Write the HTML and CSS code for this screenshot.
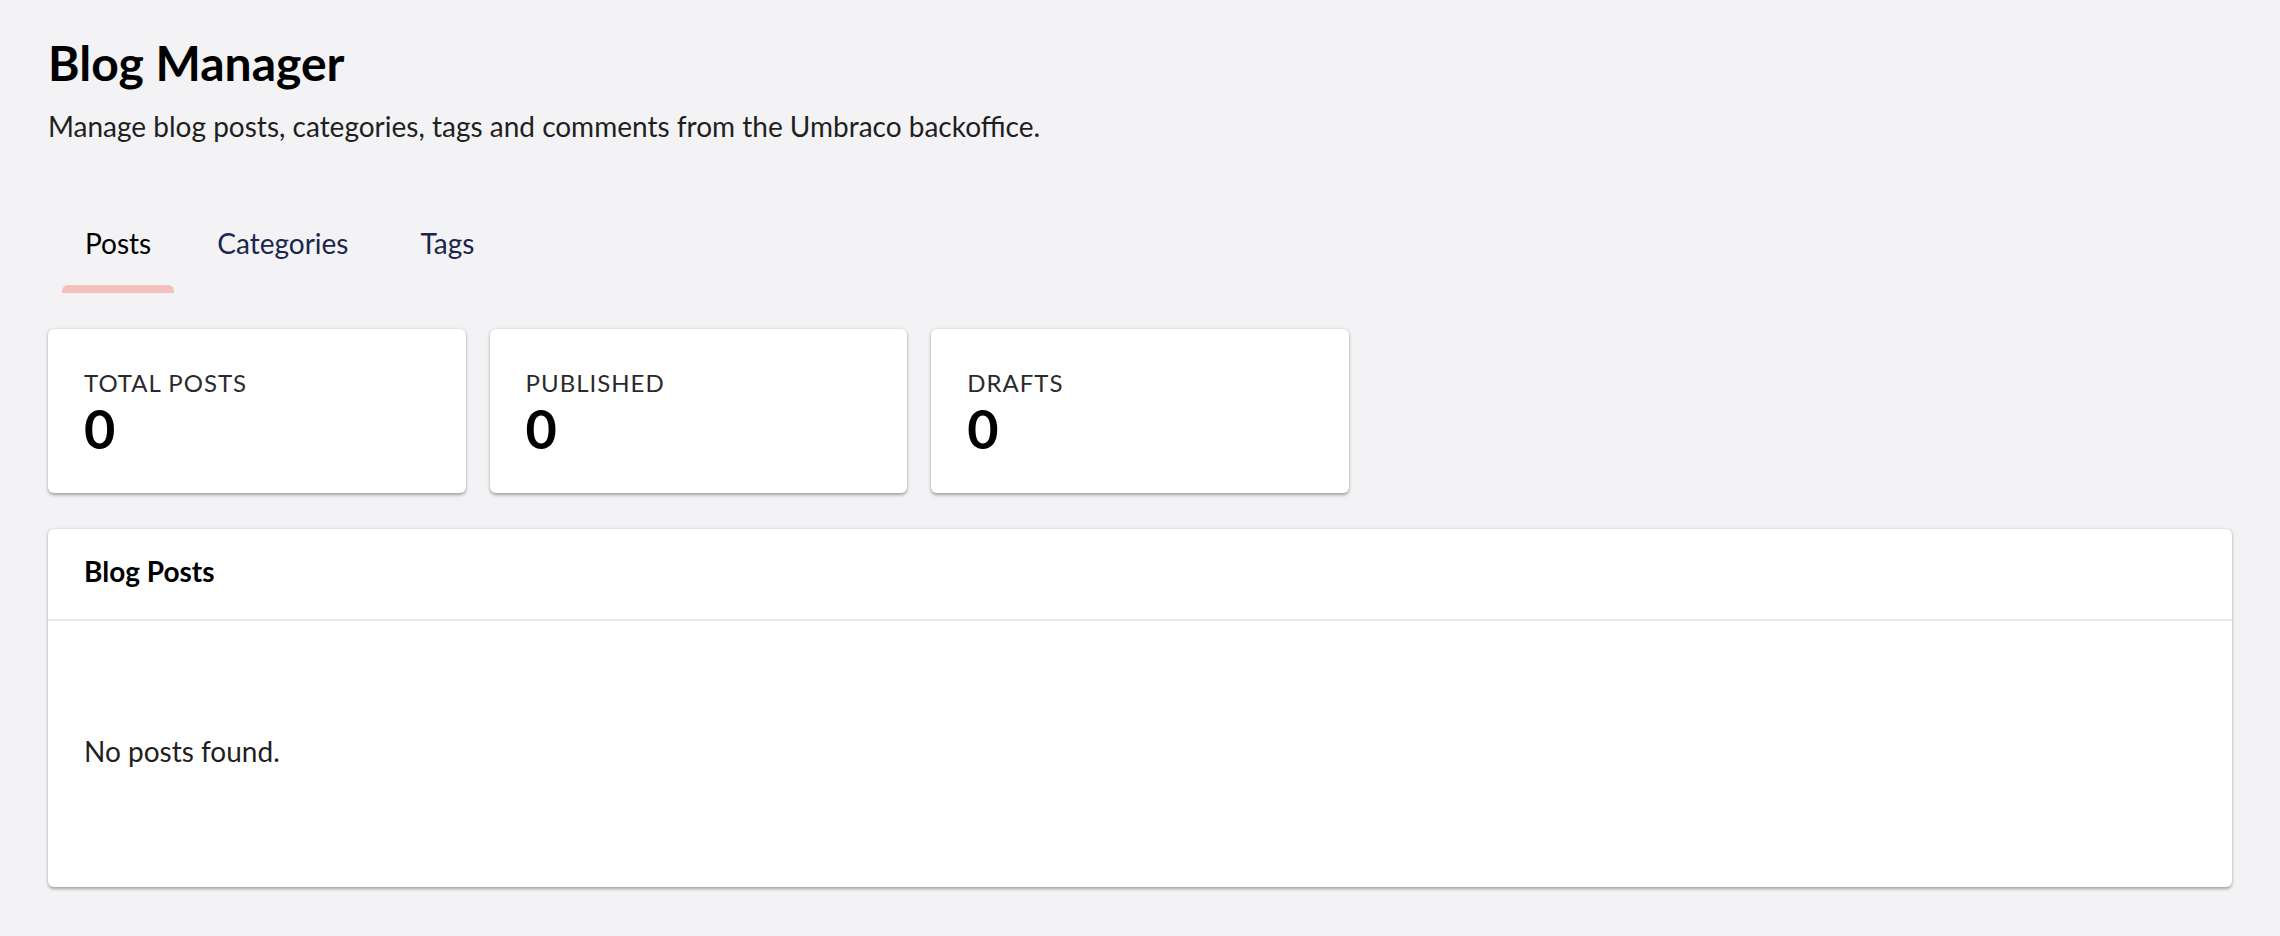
FILE: index.html
```html
<!DOCTYPE html>
<html lang="en">
<head>
<meta charset="utf-8">
<title>Blog Manager</title>
<link rel="stylesheet" href="styles.css">
</head>
<body>
<main class="page">
  <header class="page-header">
    <h1 class="page-title">Blog Manager</h1>
    <p class="page-subtitle">Manage blog posts, categories, tags and comments from the Umbraco backoffice.</p>
  </header>

  <nav class="tabs">
    <div class="tab tab-active"><span class="tab-label">Posts</span><span class="tab-bar"></span></div>
    <div class="tab"><span class="tab-label">Categories</span><span class="tab-bar"></span></div>
    <div class="tab"><span class="tab-label">Tags</span><span class="tab-bar"></span></div>
  </nav>

  <section class="stats">
    <div class="stat-card">
      <div class="stat-label">TOTAL POSTS</div>
      <div class="stat-value">0</div>
    </div>
    <div class="stat-card">
      <div class="stat-label">PUBLISHED</div>
      <div class="stat-value">0</div>
    </div>
    <div class="stat-card">
      <div class="stat-label">DRAFTS</div>
      <div class="stat-value">0</div>
    </div>
  </section>

  <section class="box">
    <div class="box-header">Blog Posts</div>
    <div class="box-body">
      <p class="empty">No posts found.</p>
    </div>
  </section>
</main>
</body>
</html>
```

FILE: styles.css
```css
* {
  box-sizing: border-box;
}

html, body {
  margin: 0;
  padding: 0;
  background: #f3f3f5;
}

body {
  font-family: Lato, "Noto Sans", "Liberation Sans", sans-serif;
  color: #1b1b1b;
  width: 2280px;
  min-height: 936px;
}

.page {
  padding: 34px 48px 48px;
}

.page-title {
  margin: 0;
  font-size: 48px;
  line-height: 57.6px;
  font-weight: 700;
  color: #000;
}

.page-subtitle {
  margin: 13px 0 0;
  font-size: 28px;
  line-height: 42px;
  color: #1f1f1f;
}

.tabs {
  display: flex;
  gap: 20px;
  margin: 75.5px 0 0 14px;
}

.tab {
  display: flex;
  flex-direction: column;
  align-items: stretch;
  min-width: 112px;
  padding: 0;
  color: #1b264f;
  font-size: 28px;
  line-height: 42px;
}

.tab-label {
  padding: 0 23px;
  text-align: center;
}

.tab-active {
  color: #000;
}

.tab-bar {
  display: block;
  height: 8px;
  margin-top: 21px;
  border-radius: 6px 6px 0 0;
  background: transparent;
}

.tab-active .tab-bar {
  background: #f5c1bc;
}

.stats {
  display: grid;
  grid-template-columns: repeat(auto-fill, minmax(375px, 1fr));
  gap: 24px;
  margin-top: 36px;
}

.stat-card {
  background: #fff;
  border-radius: 6px;
  padding: 36px;
  box-shadow: 0 1.5px 4.5px rgba(0, 0, 0, 0.12), 0 1.5px 3px rgba(0, 0, 0, 0.24);
}

.stat-label {
  font-size: 24px;
  line-height: 36px;
  letter-spacing: 1px;
  color: #2a2a2e;
}

.stat-value {
  font-size: 54px;
  line-height: 56px;
  font-weight: 700;
  color: #000;
}

.box {
  margin-top: 36px;
  background: #fff;
  border-radius: 6px;
  box-shadow: 0 1.5px 4.5px rgba(0, 0, 0, 0.12), 0 1.5px 3px rgba(0, 0, 0, 0.24);
}

.box-header {
  padding: 21px 36px 27px;
  font-size: 28px;
  line-height: 42px;
  font-weight: 700;
  color: #000;
  border-bottom: 2px solid #e9e9eb;
}

.box-body {
  padding: 109px 36px 115px;
}

.empty {
  margin: 0;
  font-size: 28px;
  line-height: 42px;
  color: #1f1f1f;
}
```
